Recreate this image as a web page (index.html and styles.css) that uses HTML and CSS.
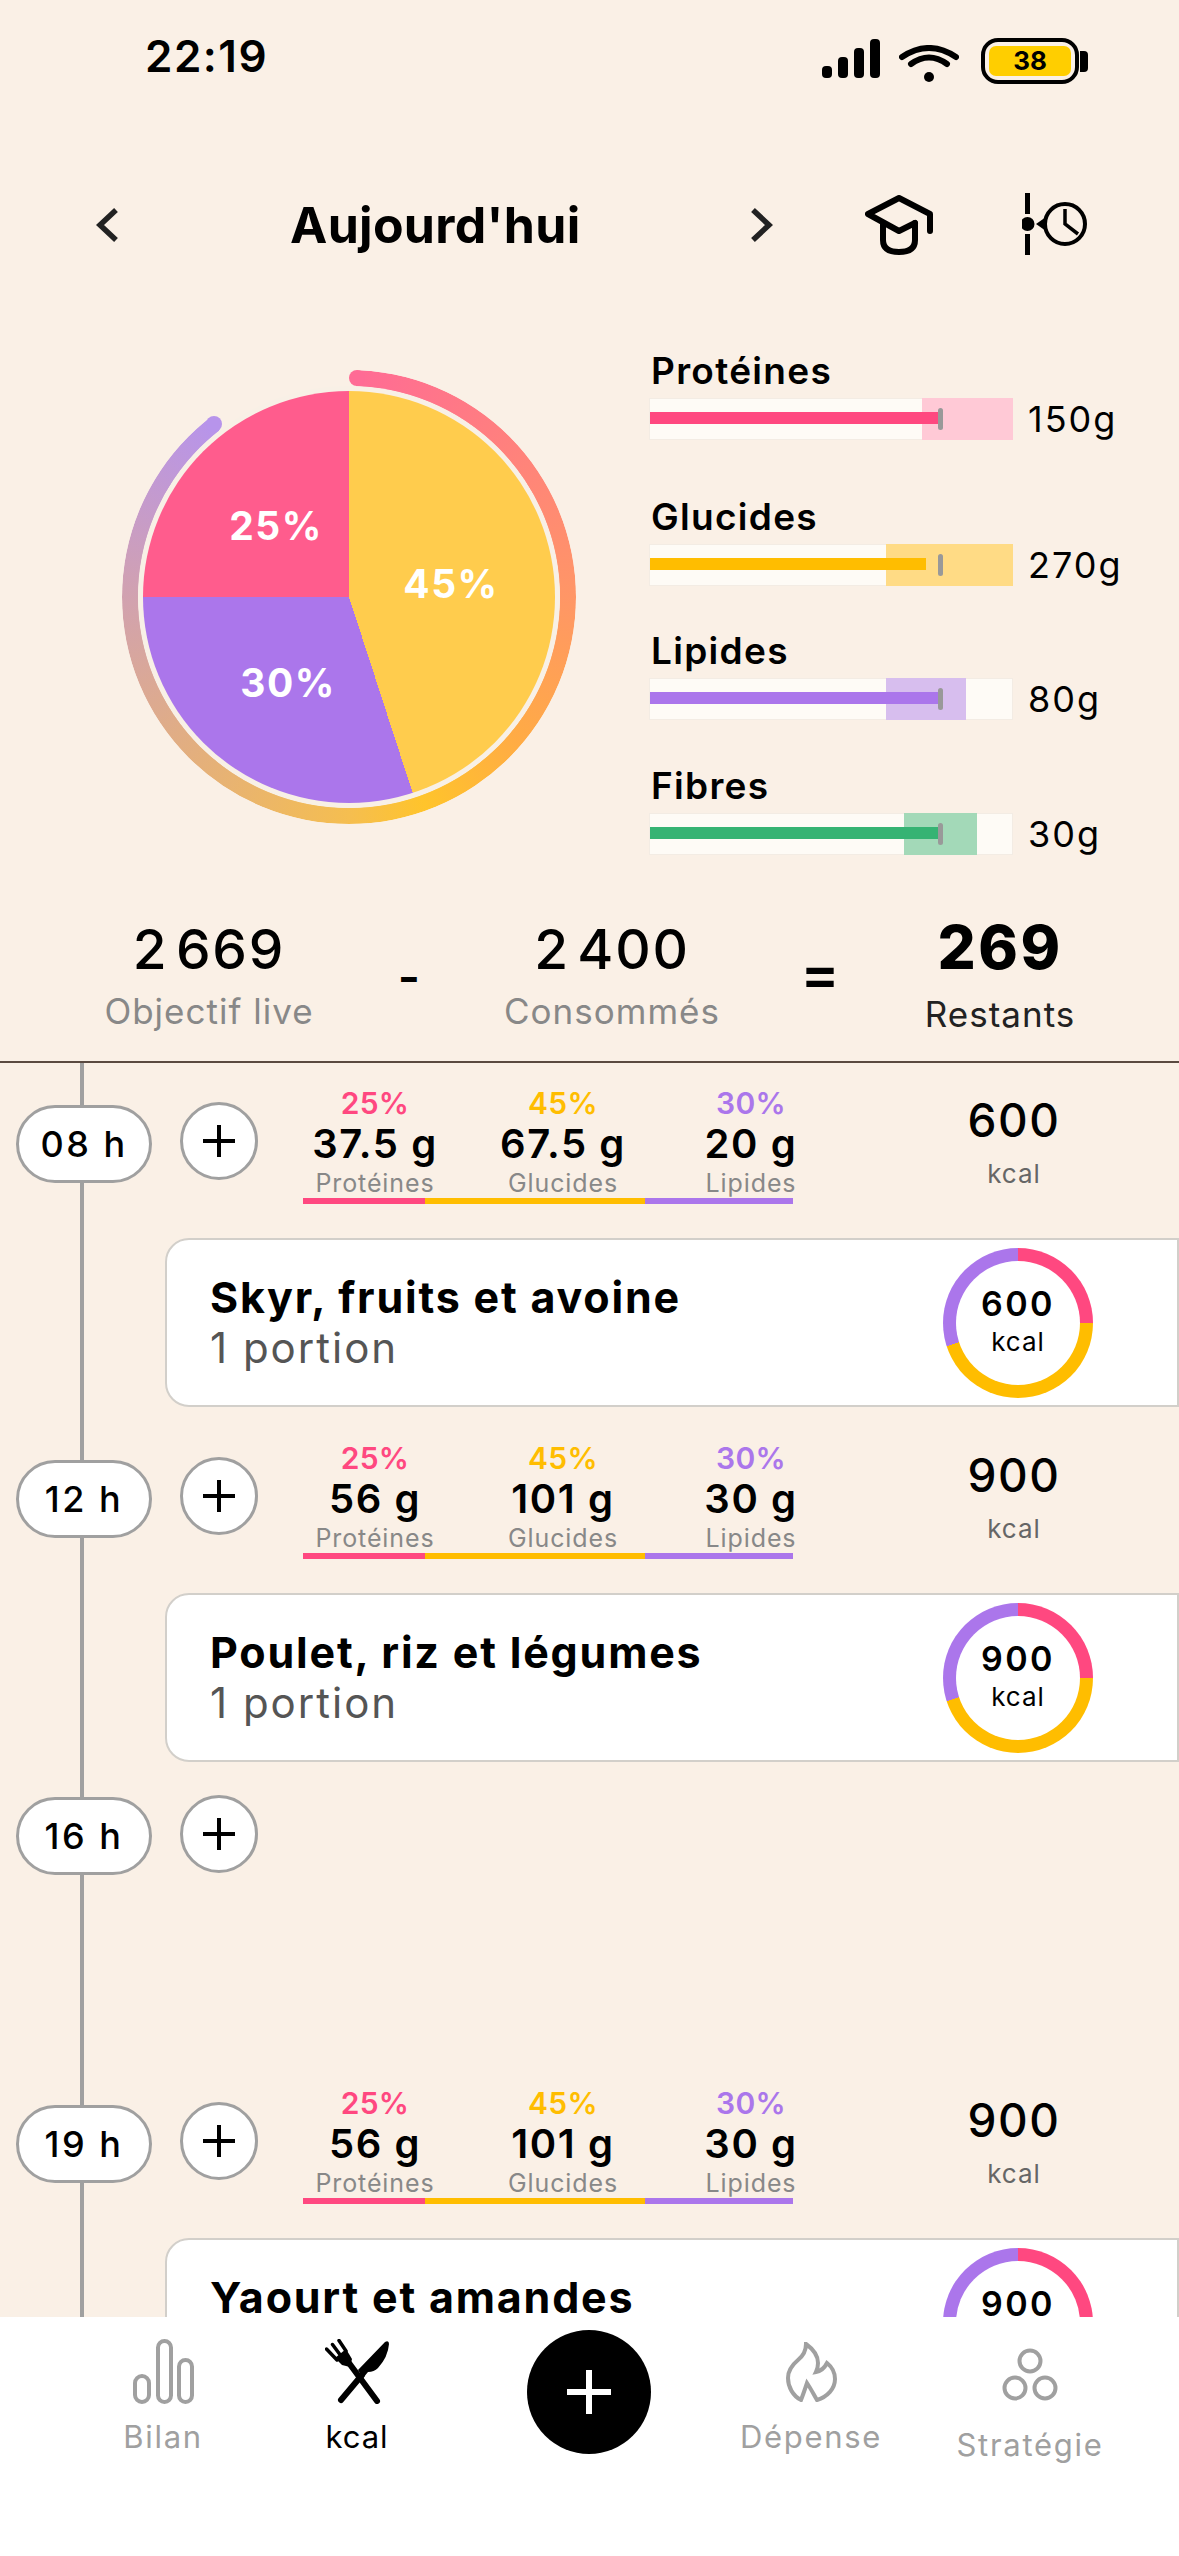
FILE: index.html
```html
<!DOCTYPE html>
<html lang="fr">

<head>
    <meta charset="UTF-8" />
    <meta name="viewport" content="width=device-width, initial-scale=1.0" />
    <title>Aujourd'hui</title>
    <link rel="stylesheet" href="styles.css">
</head>

<body>
    <div class="status">
        <span class="clock">22:19</span>
        <div class="status-icons">
            <svg class="signal" width="58" height="39" viewBox="0 0 58 39">
                <rect x="0" y="27" width="10" height="12" rx="4" />
                <rect x="16" y="18" width="10" height="21" rx="4" />
                <rect x="32" y="9" width="10" height="30" rx="4" />
                <rect x="48" y="0" width="10" height="39" rx="4" />
            </svg>
            <svg class="wifi" width="60" height="38" viewBox="0 0 60 38">
                <path d="M3 12 Q30 -6 57 12" />
                <path d="M12 19 Q30 6 48 19" />
                <circle cx="30" cy="32" r="5" />
            </svg>
            <div class="battery">
                <div class="battery-fill">38</div>
            </div>
            <div class="battery-nub"></div>
        </div>
    </div>

    <div class="nav">
        <svg class="chevron" width="24" height="36" viewBox="0 0 24 36">
            <path d="M20 3 L4 18 L20 33" />
        </svg>
        <h1 class="title">Aujourd'hui</h1>
        <svg class="chevron" width="24" height="36" viewBox="0 0 24 36">
            <path d="M4 3 L20 18 L4 33" />
        </svg>
        <svg class="cap-icon" width="68" height="60" viewBox="0 0 68 60">
            <path d="M65 36 V19 L34 3 L3 19 L34 36 L50 28" />
            <path d="M18 28 V45 Q18 57 34 57 Q50 57 50 45 V28" />
        </svg>
        <svg class="history-icon" width="66" height="64" viewBox="0 0 66 64">
            <rect x="3" y="0" width="5" height="21" />
            <rect x="3" y="41" width="5" height="21" />
            <circle cx="5.5" cy="31" r="7" class="solid" />
            <path d="M14 31 L24 24 V38 Z" class="solid" />
            <circle cx="43" cy="31" r="20" class="ring-line" />
            <path d="M43 16 V31 L56 41" class="hand" />
        </svg>
    </div>

    <div class="overview">
        <div class="chart">
            <div class="ring"></div>
            <div class="ring-cap ring-cap-start"></div>
            <div class="ring-cap ring-cap-end"></div>
            <div class="pie">
                <span class="pie-label pie-prot">25%</span>
                <span class="pie-label pie-gluc">45%</span>
                <span class="pie-label pie-lip">30%</span>
            </div>
        </div>

        <div class="goals">
            <div class="goal">
                <div class="goal-name">Protéines</div>
                <div class="goal-line">
                    <div class="goal-bar">
                        <div class="goal-band band-prot"></div>
                        <div class="goal-fill fill-prot"></div>
                        <div class="goal-mark"></div>
                    </div>
                    <span class="goal-value">150g</span>
                </div>
            </div>
            <div class="goal">
                <div class="goal-name">Glucides</div>
                <div class="goal-line">
                    <div class="goal-bar">
                        <div class="goal-band band-gluc"></div>
                        <div class="goal-fill fill-gluc"></div>
                        <div class="goal-mark"></div>
                    </div>
                    <span class="goal-value">270g</span>
                </div>
            </div>
            <div class="goal">
                <div class="goal-name">Lipides</div>
                <div class="goal-line">
                    <div class="goal-bar">
                        <div class="goal-band band-lip"></div>
                        <div class="goal-fill fill-lip"></div>
                        <div class="goal-mark"></div>
                    </div>
                    <span class="goal-value">80g</span>
                </div>
            </div>
            <div class="goal">
                <div class="goal-name">Fibres</div>
                <div class="goal-line">
                    <div class="goal-bar">
                        <div class="goal-band band-fib"></div>
                        <div class="goal-fill fill-fib"></div>
                        <div class="goal-mark"></div>
                    </div>
                    <span class="goal-value">30g</span>
                </div>
            </div>
        </div>
    </div>

    <div class="summary">
        <div class="stat">
            <div class="stat-value">2 669</div>
            <div class="stat-label">Objectif live</div>
        </div>
        <div class="operator operator-minus">-</div>
        <div class="stat">
            <div class="stat-value">2 400</div>
            <div class="stat-label">Consommés</div>
        </div>
        <div class="operator">=</div>
        <div class="stat stat-main">
            <div class="stat-value">269</div>
            <div class="stat-label">Restants</div>
        </div>
    </div>

    <div class="timeline">
        <div class="slot">
            <div class="time">08 h</div>
            <div class="add">
                <svg width="34" height="34" viewBox="0 0 34 34"><path d="M17 1 V33 M1 17 H33" /></svg>
            </div>
            <div class="slot-macros">
                <div class="macro-cols">
                    <div class="macro">
                        <div class="macro-pct pct-prot">25%</div>
                        <div class="macro-grams">37.5 g</div>
                        <div class="macro-name">Protéines</div>
                    </div>
                    <div class="macro">
                        <div class="macro-pct pct-gluc">45%</div>
                        <div class="macro-grams">67.5 g</div>
                        <div class="macro-name">Glucides</div>
                    </div>
                    <div class="macro">
                        <div class="macro-pct pct-lip">30%</div>
                        <div class="macro-grams">20 g</div>
                        <div class="macro-name">Lipides</div>
                    </div>
                </div>
                <div class="split"><span></span><span></span><span></span></div>
            </div>
            <div class="slot-kcal">
                <div class="kcal-value">600</div>
                <div class="kcal-unit">kcal</div>
            </div>
        </div>
        <div class="card">
            <div class="card-text">
                <div class="card-title">Skyr, fruits et avoine</div>
                <div class="card-sub">1 portion</div>
            </div>
            <div class="donut">
                <div class="donut-inner">
                    <div class="donut-value">600</div>
                    <div class="donut-unit">kcal</div>
                </div>
            </div>
        </div>

        <div class="slot">
            <div class="time">12 h</div>
            <div class="add">
                <svg width="34" height="34" viewBox="0 0 34 34"><path d="M17 1 V33 M1 17 H33" /></svg>
            </div>
            <div class="slot-macros">
                <div class="macro-cols">
                    <div class="macro">
                        <div class="macro-pct pct-prot">25%</div>
                        <div class="macro-grams">56 g</div>
                        <div class="macro-name">Protéines</div>
                    </div>
                    <div class="macro">
                        <div class="macro-pct pct-gluc">45%</div>
                        <div class="macro-grams">101 g</div>
                        <div class="macro-name">Glucides</div>
                    </div>
                    <div class="macro">
                        <div class="macro-pct pct-lip">30%</div>
                        <div class="macro-grams">30 g</div>
                        <div class="macro-name">Lipides</div>
                    </div>
                </div>
                <div class="split"><span></span><span></span><span></span></div>
            </div>
            <div class="slot-kcal">
                <div class="kcal-value">900</div>
                <div class="kcal-unit">kcal</div>
            </div>
        </div>
        <div class="card">
            <div class="card-text">
                <div class="card-title">Poulet, riz et légumes</div>
                <div class="card-sub">1 portion</div>
            </div>
            <div class="donut">
                <div class="donut-inner">
                    <div class="donut-value">900</div>
                    <div class="donut-unit">kcal</div>
                </div>
            </div>
        </div>

        <div class="slot slot-empty">
            <div class="time">16 h</div>
            <div class="add">
                <svg width="34" height="34" viewBox="0 0 34 34"><path d="M17 1 V33 M1 17 H33" /></svg>
            </div>
        </div>

        <div class="slot">
            <div class="time">19 h</div>
            <div class="add">
                <svg width="34" height="34" viewBox="0 0 34 34"><path d="M17 1 V33 M1 17 H33" /></svg>
            </div>
            <div class="slot-macros">
                <div class="macro-cols">
                    <div class="macro">
                        <div class="macro-pct pct-prot">25%</div>
                        <div class="macro-grams">56 g</div>
                        <div class="macro-name">Protéines</div>
                    </div>
                    <div class="macro">
                        <div class="macro-pct pct-gluc">45%</div>
                        <div class="macro-grams">101 g</div>
                        <div class="macro-name">Glucides</div>
                    </div>
                    <div class="macro">
                        <div class="macro-pct pct-lip">30%</div>
                        <div class="macro-grams">30 g</div>
                        <div class="macro-name">Lipides</div>
                    </div>
                </div>
                <div class="split"><span></span><span></span><span></span></div>
            </div>
            <div class="slot-kcal">
                <div class="kcal-value">900</div>
                <div class="kcal-unit">kcal</div>
            </div>
        </div>
        <div class="card">
            <div class="card-text">
                <div class="card-title">Yaourt et amandes</div>
                <div class="card-sub">1 portion</div>
            </div>
            <div class="donut">
                <div class="donut-inner">
                    <div class="donut-value">900</div>
                    <div class="donut-unit">kcal</div>
                </div>
            </div>
        </div>
    </div>

    <div class="tabbar">
        <div class="tab">
            <svg class="tab-icon" width="61" height="65" viewBox="0 0 61 65">
                <rect x="2" y="37" width="14" height="26" rx="7" />
                <rect x="25" y="2" width="13" height="61" rx="6.5" />
                <rect x="46" y="21" width="13" height="42" rx="6.5" />
            </svg>
            <span class="tab-label">Bilan</span>
        </div>
        <div class="tab tab-active">
            <svg class="tab-icon-solid" width="64" height="65" viewBox="0 0 64 65">
                <path d="M24 24 L52 62" class="utensil" />
                <path d="M16 61 L37 36" class="utensil" />
                <path d="M1.5 10 L12 21 M7.5 5.5 L16 17 M14 1.5 L21 12" class="tine" />
                <path d="M10 19 L21 10 L27 20 L25 28 L17 26 Z" />
                <path d="M33 31 L60 3 Q64 1 64 5 Q63 18 53 29 Q49 33 43 33 L38 39 Z" />
            </svg>
            <span class="tab-label">kcal</span>
        </div>
        <div class="tab">
            <div class="fab">
                <svg width="44" height="44" viewBox="0 0 44 44"><path d="M22 0 V44 M0 22 H44" /></svg>
            </div>
        </div>
        <div class="tab">
            <svg class="tab-icon tab-flame" width="51" height="60" viewBox="0 0 51 60">
                <path d="M20 2 C27 7 32 14 32 21 C32 25 31 28 30 30 C35 29 39 25 41 21 C46 25 49 31 49 37 C49 47 41 55 31 58 C28 53 25 47 21 41 C19 47 17 53 15 58 C7 54 2 45 2 36 C2 28 6 23 12 18 C17 14 20 9 20 2 Z" />
            </svg>
            <span class="tab-label">Dépense</span>
        </div>
        <div class="tab tab-low">
            <svg class="tab-icon" width="56" height="65" viewBox="0 0 56 65">
                <circle cx="28" cy="22" r="10.5" />
                <circle cx="13" cy="49" r="10.5" />
                <circle cx="43" cy="49" r="10.5" />
            </svg>
            <span class="tab-label">Stratégie</span>
        </div>
    </div>
</body>

</html>
```

FILE: styles.css
```css
* {
    box-sizing: border-box;
}

body {
    font-family: Inter, "Noto Sans", sans-serif;
    background-color: #faf0e6;
    color: #000;
    margin: 0;
    width: 1179px;
    height: 2556px;
    display: flex;
    flex-direction: column;
    overflow: hidden;
}

/* status bar */
.status {
    height: 110px;
    padding: 38px 91px 0 145px;
    display: flex;
    justify-content: space-between;
    flex-shrink: 0;
}

.clock {
    font-size: 44px;
    line-height: 44px;
    font-weight: 600;
    letter-spacing: 1.5px;
    margin-top: -4px;
}

.status-icons {
    display: flex;
    align-items: flex-start;
}

.signal {
    margin-top: 1px;
}

.wifi {
    margin: 7px 22px 0 19px;
}

.wifi path {
    fill: none;
    stroke: #000;
    stroke-width: 6;
    stroke-linecap: round;
}

.battery {
    width: 98px;
    height: 46px;
    border: 4px solid #000;
    border-radius: 17px;
    padding: 4px;
}

.battery-fill {
    height: 30px;
    background-color: #ffce00;
    border-radius: 7px;
    text-align: center;
    font-size: 26px;
    line-height: 30px;
    font-weight: 700;
}

.battery-nub {
    width: 8px;
    height: 21px;
    margin: 13px 0 0 1px;
    background-color: #000;
    border-radius: 0 4px 4px 0;
}

/* nav */
.nav {
    height: 70px;
    margin-top: 80px;
    padding-left: 96px;
    display: flex;
    align-items: center;
    flex-shrink: 0;
}

.chevron path {
    fill: none;
    stroke: #222;
    stroke-width: 5.5;
}

.title {
    width: 459px;
    margin: 0 0 0 170px;
    font-size: 50px;
    font-weight: 700;
    letter-spacing: 0.3px;
    white-space: nowrap;
}

.cap-icon {
    margin-left: 92px;
}

.cap-icon path {
    fill: none;
    stroke: #000;
    stroke-width: 6;
    stroke-linecap: round;
    stroke-linejoin: round;
}

.history-icon {
    margin-left: 89px;
}

.ring-line {
    fill: none;
    stroke: #000;
    stroke-width: 4;
}

.hand {
    fill: none;
    stroke: #000;
    stroke-width: 3.5;
}

/* pie + goals */
.overview {
    margin-top: 89px;
    padding-left: 122px;
    display: flex;
    align-items: flex-start;
    flex-shrink: 0;
}

.chart {
    position: relative;
    width: 454px;
    height: 454px;
    margin-top: 21px;
    padding: 21px;
    flex-shrink: 0;
}

.ring {
    position: absolute;
    inset: 0;
    border-radius: 50%;
    background: conic-gradient(transparent 0deg 2deg, #ff6b95 2deg, #ff9666 90deg, #ffab45 130deg, #ffc42b 160deg,
            #f5be50 180deg, #e3af7e 225deg, #cfa0b5 275deg, #b794eb 322deg, transparent 322deg);
    -webkit-mask: radial-gradient(closest-side, transparent 210.5px, #000 211px);
    mask: radial-gradient(closest-side, transparent 210.5px, #000 211px);
}

.ring-cap {
    position: absolute;
    width: 16px;
    height: 16px;
    border-radius: 50%;
}

.ring-cap-start {
    left: 227px;
    top: 0;
    background-color: #ff6b95;
}

.ring-cap-end {
    left: 84px;
    top: 46px;
    background-color: #b794eb;
}

.pie {
    position: relative;
    width: 412px;
    height: 412px;
    border-radius: 50%;
    background: conic-gradient(#ffcc4d 0deg 162deg, #ab76eb 162deg 270deg, #ff5c8d 270deg);
    box-shadow: 0 0 0 5px #f8f0e6;
}

.pie-label {
    position: absolute;
    transform: translate(-50%, -50%);
    color: #fff;
    font-size: 39px;
    font-weight: 700;
    letter-spacing: 1.5px;
}

.pie-prot {
    left: 133px;
    top: 134px;
}

.pie-gluc {
    left: 308px;
    top: 192px;
}

.pie-lip {
    left: 145px;
    top: 291px;
}

.goals {
    margin-left: 73px;
}

.goal:nth-child(1) {
    margin-bottom: 55px;
}

.goal:nth-child(2) {
    margin-bottom: 43px;
}

.goal:nth-child(3) {
    margin-bottom: 44px;
}

.goal-name {
    font-size: 37px;
    line-height: 44px;
    font-weight: 600;
    letter-spacing: 1.3px;
    margin: 0 0 5px 2px;
}

.goal-line {
    display: flex;
    align-items: center;
}

.goal-bar {
    position: relative;
    width: 364px;
    height: 42px;
    background-color: #fefbf6;
    border: 1px solid #f3ece4;
}

.goal-band {
    position: absolute;
    top: -1px;
    bottom: -1px;
}

.goal-fill {
    position: absolute;
    left: 0;
    top: 13px;
    height: 12px;
}

.goal-mark {
    position: absolute;
    left: 288px;
    top: 9px;
    width: 5px;
    height: 22px;
    border-radius: 3px;
    background-color: #999;
}

.band-prot {
    left: 272px;
    right: -1px;
    background-color: #ffc9d6;
}

.band-gluc {
    left: 236px;
    right: -1px;
    background-color: #ffdb85;
}

.band-lip {
    left: 236px;
    width: 80px;
    background-color: #d7beee;
}

.band-fib {
    left: 254px;
    width: 73px;
    background-color: #a3d9b8;
}

.fill-prot {
    width: 288px;
    background-color: #ff4880;
}

.fill-gluc {
    width: 276px;
    background-color: #ffbd00;
}

.fill-lip {
    width: 288px;
    background-color: #ab76eb;
}

.fill-fib {
    width: 288px;
    background-color: #36b373;
}

.goal-value {
    margin-left: 15px;
    font-size: 36px;
    line-height: 42px;
    letter-spacing: 2px;
}

/* totals */
.summary {
    height: 144px;
    margin-top: 62px;
    padding-left: 60px;
    display: grid;
    grid-template-columns: 298px 102px 304px 112px 248px;
    flex-shrink: 0;
    text-align: center;
}

.stat-value {
    font-size: 55px;
    line-height: 64px;
    font-weight: 500;
    letter-spacing: 1.8px;
    word-spacing: -9px;
}

.stat-label {
    margin-top: 8px;
    font-size: 35px;
    line-height: 44px;
    letter-spacing: 1px;
    color: #888;
}

.stat-main .stat-value {
    margin-top: -2px;
    font-size: 60px;
    font-weight: 800;
    letter-spacing: 2.5px;
}

.stat-main .stat-label {
    margin-top: 13px;
    font-size: 35px;
    color: #222;
}

.operator {
    font-size: 58px;
    line-height: 64px;
    font-weight: 600;
    margin-top: 24px;
}

.operator-minus {
    font-size: 48px;
    margin-top: 28px;
}

/* timeline */
.timeline {
    position: relative;
    flex: 1;
    min-height: 0;
    overflow: hidden;
    border-top: 2px solid #5a4a40;
    padding-top: 22px;
}

.timeline::before {
    content: "";
    position: absolute;
    left: 80px;
    top: 0;
    bottom: 0;
    width: 4px;
    background-color: #a0a0a0;
}

.slot {
    position: relative;
    display: flex;
    align-items: flex-start;
    height: 119px;
    padding-left: 16px;
}

.slot-empty {
    height: 290px;
}

.time {
    width: 136px;
    height: 78px;
    margin-top: 20px;
    border: 3px solid #a0a0a0;
    border-radius: 39px;
    background-color: #fff;
    text-align: center;
    font-size: 36px;
    line-height: 72px;
    font-weight: 500;
    letter-spacing: 2.5px;
}

.add {
    width: 78px;
    height: 78px;
    margin: 17px 0 0 28px;
    border: 3px solid #a0a0a0;
    border-radius: 50%;
    background-color: #fff;
    display: flex;
    align-items: center;
    justify-content: center;
}

.add path {
    fill: none;
    stroke: #000;
    stroke-width: 4;
}

.slot-empty .time {
    margin-top: 2px;
}

.slot-empty .add {
    margin-top: 0;
}

.slot-macros {
    width: 564px;
    margin-left: 23px;
}

.macro-cols {
    display: grid;
    grid-template-columns: repeat(3, 188px);
    text-align: center;
}

.macro-pct {
    font-size: 30px;
    line-height: 36px;
    font-weight: 600;
    letter-spacing: 0.3px;
}

.pct-prot {
    color: #ff4880;
}

.pct-gluc {
    color: #ffbd00;
}

.pct-lip {
    color: #ab76eb;
}

.macro-grams {
    margin-top: 1px;
    font-size: 40px;
    line-height: 44px;
    font-weight: 600;
    letter-spacing: 1.6px;
}

.macro-name {
    margin-top: 3px;
    font-size: 25px;
    line-height: 28px;
    letter-spacing: 0.9px;
    color: #888;
}

.split {
    display: flex;
    height: 6px;
    width: 490px;
    margin: 1px 0 0 22px;
}

.split span:nth-child(1) {
    width: 122px;
    background-color: #ff4880;
}

.split span:nth-child(2) {
    width: 220px;
    background-color: #ffbd00;
}

.split span:nth-child(3) {
    width: 148px;
    background-color: #ab76eb;
}

.slot-kcal {
    width: 200px;
    margin: 9px 0 0 69px;
    text-align: center;
}

.kcal-value {
    font-size: 46px;
    line-height: 52px;
    font-weight: 500;
    letter-spacing: 1.5px;
}

.kcal-unit {
    margin-top: 13px;
    font-size: 26px;
    line-height: 30px;
    letter-spacing: 1px;
    color: #666;
}

.card {
    position: relative;
    width: 1014px;
    height: 169px;
    margin: 34px 0 33px 165px;
    padding: 0 84px 0 43px;
    background-color: #fff;
    border: 2px solid #d2cfca;
    border-radius: 24px 0 0 24px;
    display: flex;
    align-items: center;
    justify-content: space-between;
    flex-shrink: 0;
}

.card-text {
    margin-top: -1px;
}

.card-title {
    font-size: 43px;
    line-height: 52px;
    font-weight: 700;
    letter-spacing: 1.8px;
}

.card-sub {
    font-size: 42px;
    line-height: 50px;
    letter-spacing: 2px;
    color: #555;
}

.donut {
    width: 150px;
    height: 150px;
    padding: 13px;
    border-radius: 50%;
    background: conic-gradient(#ff4880 0deg 90deg, #ffbd00 90deg 252deg, #ab76eb 252deg);
}

.donut-inner {
    width: 124px;
    height: 124px;
    border-radius: 50%;
    background-color: #fff;
    display: flex;
    flex-direction: column;
    align-items: center;
    justify-content: center;
}

.donut-value {
    font-size: 34px;
    line-height: 38px;
    font-weight: 600;
    letter-spacing: 2.5px;
}

.donut-unit {
    font-size: 26px;
    line-height: 38px;
    letter-spacing: 1px;
}

/* tab bar */
.tabbar {
    position: relative;
    height: 239px;
    padding: 22px 0 0 52px;
    background-color: #fff;
    display: grid;
    grid-template-columns: 222px 166px 298px 146px 292px;
    align-items: start;
    flex-shrink: 0;
}

.tab {
    display: flex;
    flex-direction: column;
    align-items: center;
}

.tab-icon {
    fill: none;
    stroke: #a0a0a0;
    stroke-width: 4;
}

.tab-icon-solid {
    fill: #000;
}

.utensil {
    fill: none;
    stroke: #000;
    stroke-width: 6;
    stroke-linecap: round;
}

.tine {
    fill: none;
    stroke: #000;
    stroke-width: 3.5;
    stroke-linecap: round;
}

.tab-flame {
    margin: 3px 0 2px;
}

.tab-label {
    margin-top: 14px;
    font-size: 31px;
    line-height: 38px;
    letter-spacing: 1.7px;
    color: #a0a0a0;
}

.tab-active .tab-label {
    color: #000;
    letter-spacing: 1px;
}

.tab-low .tab-label {
    margin-top: 22px;
}

.fab {
    width: 124px;
    height: 124px;
    margin-top: -9px;
    border-radius: 50%;
    background-color: #000;
    display: flex;
    align-items: center;
    justify-content: center;
}

.fab path {
    fill: none;
    stroke: #fff;
    stroke-width: 6;
}
```
